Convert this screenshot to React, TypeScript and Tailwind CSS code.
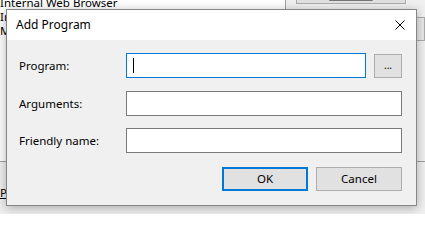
import React from "react";

const font = { fontFamily: '"Noto Sans", "Open Sans", sans-serif' };

const Field: React.FC<{ label: string; focused?: boolean; browse?: boolean; className?: string }> = ({
  label,
  focused = false,
  browse = false,
  className = "",
}) => (
  <div className={`flex items-center h-[25px] ${className}`}>
    <div className="w-[119px] pl-[12px] text-black">{label}</div>
    {browse ? (
      <>
        <div className="relative w-[240px] h-[25px] bg-white border border-[#0078d7]">
          {focused && <div className="absolute left-[6px] top-[4px] w-px h-[15px] bg-black" />}
        </div>
        <div className="ml-[8px] w-[28px] h-[24px] bg-[#e1e1e1] border border-[#adadad] flex items-center justify-center text-[10px] leading-none pb-[2px]">
          ...
        </div>
      </>
    ) : (
      <div className="w-[276px] h-[25px] bg-white border border-[#7a7a7a]" />
    )}
  </div>
);

export default function App() {
  return (
    <div className="relative w-[425px] h-[214px] overflow-hidden bg-[#f0f0f0] text-[11.5px]" style={font}>
      {/* backdrop window */}
      <div className="flex h-[162px]">
        <div className="w-[297px] h-full bg-white border-r border-b border-[#a0a0a0] leading-[14px] text-black">
          <div className="-mt-[4px]">Internal Web Browser</div>
          <div>Internet Explorer</div>
          <div>Microsoft Edge</div>
        </div>
        <div className="flex-1 border-b border-[#a0a0a0] bg-[#f0f0f0]">
          <div className="ml-[10px] -mt-[20px] w-[110px] h-[24px] bg-[#e1e1e1] border border-[#adadad] flex items-end justify-center text-[#777] underline">
            Remove
          </div>
          <div className="ml-[119px] mt-[13px] w-[20px] h-[24px] border border-[#adadad] bg-[#e8e8e8]" />
        </div>
      </div>
      <div className="flex justify-between items-end h-[52px] pb-[14px] leading-[14px]">
        <span>
          <span className="underline">P</span>rogram
        </span>
        <span className="mr-[-40px]">name</span>
      </div>

      {/* dialog */}
      <div className="absolute left-[6px] top-[9px] w-[411px] h-[197px] border border-[#868686] bg-[#f0f0f0] shadow-[0_2px_10px_rgba(0,0,0,0.3)] flex flex-col">
        <div className="h-[30px] bg-white flex items-center justify-between pl-[9px] pr-[11px] text-black">
          <span className="text-[12px]">Add Program</span>
          <svg width="10" height="10" viewBox="0 0 10 10">
            <path d="M0.5 0.5 L9.5 9.5 M9.5 0.5 L0.5 9.5" stroke="#000" strokeWidth="1" fill="none" />
          </svg>
        </div>
        <div className="flex-1 flex flex-col pt-[13px]">
          <Field label="Program:" focused browse />
          <Field label="Arguments:" className="mt-[13px]" />
          <Field label="Friendly name:" className="mt-[12px]" />
          <div className="flex justify-end gap-[8px] mt-[14px] pr-[14px]">
            <div className="w-[86px] h-[24px] bg-[#e1e1e1] border-2 border-[#0078d7] flex items-center justify-center">
              OK
            </div>
            <div className="w-[86px] h-[24px] bg-[#e1e1e1] border border-[#adadad] flex items-center justify-center">
              Cancel
            </div>
          </div>
        </div>
      </div>
    </div>
  );
}
